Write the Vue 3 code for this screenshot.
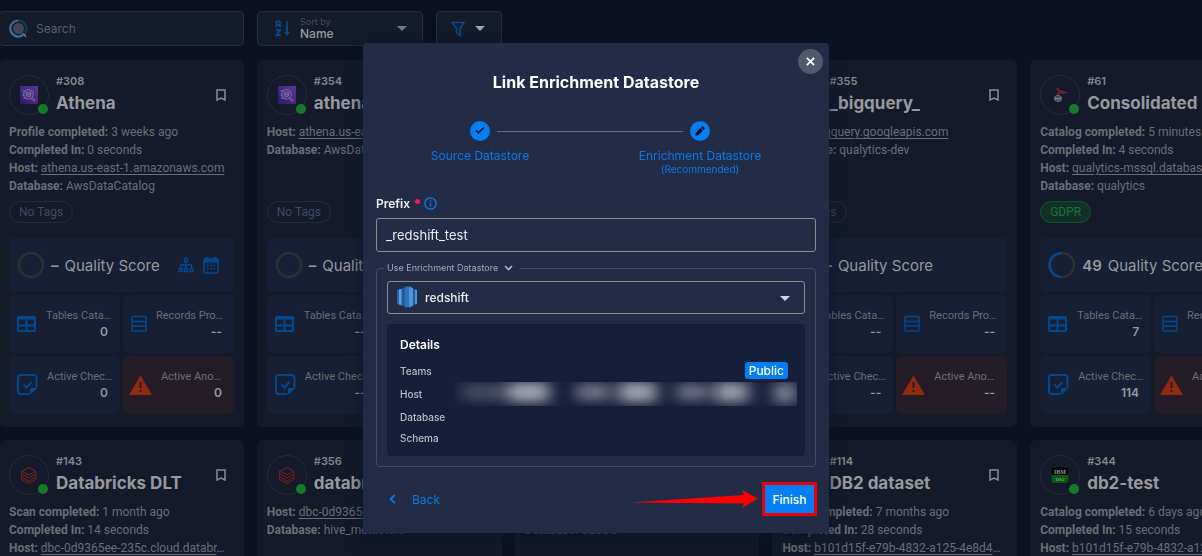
<script setup>
import { ref } from 'vue'

const prefix = ref('_redshift_test')
const datastore = ref('redshift')
const sort = ref('Name')
const query = ref('')

const cards = [
  { id: 308, name: 'Athena', logo: 'athena', score: '–', tools: true, tag: 'No Tags',
    info: [['Profile completed', '3 weeks ago'], ['Completed In', '0 seconds'], ['Host', 'athena.us-east-1.amazonaws.com', 'link'], ['Database', 'AwsDataCatalog']],
    stats: ['0', '--', '0', '0'] },
  { id: 354, name: 'athena_test', logo: 'athena', score: '–', tag: 'No Tags',
    info: [['Host', 'athena.us-east-1.amazonaws.com', 'link'], ['Database', 'AwsDataCatalog']],
    stats: ['--', '--', '--', '--'] },
  { id: 340, name: 'athena', logo: 'athena', score: '–', tag: 'No Tags',
    info: [['Database', 'AwsDataCatalog']],
    stats: ['--', '--', '--', '--'] },
  { id: 355, name: '_bigquery_', logo: 'athena', score: '–', tag: 'No Tags',
    info: [['Host', 'bigquery.googleapis.com', 'link'], ['Database', 'qualytics-dev']],
    stats: ['--', '--', '--', '--'] },
  { id: 61, name: 'Consolidated', logo: 'mssql', score: '49', tag: 'GDPR',
    info: [['Catalog completed', '5 minutes ago'], ['Completed In', '4 seconds'], ['Host', 'qualytics-mssql.database', 'link', '…'], ['Database', 'qualytics']],
    stats: ['7', '36', '114', '8'] },
  { id: 143, name: 'Databricks DLT', logo: 'databricks', score: '–', tag: 'No Tags',
    info: [['Scan completed', '1 month ago'], ['Completed In', '14 seconds'], ['Host', 'dbc-0d9365ee-235c.cloud.databr', 'link', '…']],
    stats: ['--', '--', '--', '--'] },
  { id: 356, name: 'databricks', logo: 'databricks', score: '–', tag: 'No Tags',
    info: [['Host', 'dbc-0d9365ee-235c.cloud.databr', 'link', '…'], ['Database', 'hive_metastore']],
    stats: ['--', '--', '--', '--'] },
  { id: 113, name: 'db2', logo: 'db2', score: '–', tag: 'No Tags',
    info: [['Host', 'b101d15f', 'link'], ['Database', 'BLUDB']],
    stats: ['--', '--', '--', '--'] },
  { id: 114, name: 'DB2 dataset', logo: 'db2', score: '–', tag: 'No Tags',
    info: [['Scan completed', '7 months ago'], ['Completed In', '28 seconds'], ['Host', 'b101d15f-e79b-4832-a125-4e8d4', 'link', '…']],
    stats: ['--', '--', '--', '--'] },
  { id: 344, name: 'db2-test', logo: 'db2', score: '–', tag: 'No Tags',
    info: [['Catalog completed', '6 days ago'], ['Completed In', '15 seconds'], ['Host', 'b101d15f-e79b-4832-a125-4e8d4', 'link', '…']],
    stats: ['--', '--', '--', '--'] },
]
const statLabels = ['Tables Cata…', 'Records Pro…', 'Active Chec…', 'Active Ano…']
</script>

<template>
  <div class="page">
    <header class="toolbar">
      <label class="box search">
        <svg width="20" height="20" viewBox="0 0 20 20" fill="none">
          <circle cx="9.500" cy="9.500" r="5.500" fill="#3d4755" />
          <path d="M9.500 1.500a8 8 0 1 0 4.500 14.500" stroke="#3c6d97" stroke-width="2.200" />
          <path d="M9.500 1.500a8 8 0 0 1 6.500 12.500" stroke="#123d58" stroke-width="2.200" />
          <path d="M12 13.500l4.500 1.500l1 4l-3-2.500" fill="#4a7ba6" />
        </svg>
        <input v-model="query" type="search" placeholder="Search" aria-label="Search" />
      </label>
      <div class="box sort">
        <svg width="16" height="17" viewBox="0 0 16 17" fill="none" stroke="#04498f" stroke-width="1.800">
          <path d="M1.500 7V2.500Q1.500 1.200 3.300 1.200T5 2.500V7M1.500 4.800H5M1 10.200H5L1.500 15H5.700M12 1v12" />
          <path d="M9 12h6l-3 4z" fill="#04498f" stroke="none" />
        </svg>
        <div class="sort-text">
          <label for="sort">Sort by</label>
          <select id="sort" v-model="sort"><option>Name</option></select>
        </div>
        <i class="caret"></i>
      </div>
      <button class="box filter" aria-label="Filter">
        <svg width="14" height="16" viewBox="0 0 14 16" fill="none" stroke="#04498f" stroke-width="1.600">
          <path d="M1 1.500h12L9 7.500v7l-3.500-3v-4z" />
        </svg>
        <i class="caret bright"></i>
      </button>
    </header>

    <main class="grid">
      <article v-for="c in cards" :key="c.id" class="card">
        <div class="head">
          <span class="avatar">
            <svg v-if="c.logo === 'athena'" width="18" height="18" viewBox="0 0 18 18" fill="none">
              <defs><linearGradient id="purple" x1="0" y1="1" x2="1" y2="0"><stop stop-color="#2e1a6c" /><stop offset="1" stop-color="#5a3793" /></linearGradient></defs>
              <path fill="url(#purple)" d="M0 0h18v18H0z" />
              <g stroke="#8f82ae" stroke-width=".8">
                <circle cx="8.500" cy="8.300" r="4.800" /><ellipse cx="8.500" cy="6.800" rx="2.500" ry="1" />
                <path d="M6 6.800l.5 3.500q2 1 4 0l.5-3.500M12 11.300l3.300 3-1.200 1.200-3-3.200M2.500 5h3M2.500 9h2M3 12h3M7 9h3" />
              </g>
            </svg>
            <svg v-else-if="c.logo === 'databricks'" width="18" height="18" viewBox="0 0 18 18" fill="none" stroke="#7d221f" stroke-width="1">
              <path d="M1.500 5.500L9 1.500l6.500 3.700L9 9 1.500 5.200v2.500L9 12l7-4V6M1.500 8.500v2.300L9 15l7-4V8.500M1.500 11.500v1.800L9 17.300l7-4v-2.500" />
            </svg>
            <svg v-else-if="c.logo === 'mssql'" width="18" height="18" viewBox="0 0 18 18" fill="none">
              <path d="M6 3l3 1 2 2 5 0-3 2-3 0-3 1-2 0 2-3z" fill="#6b1d27" />
              <path d="M5 3.500l3-1.500M8 4l4 3M11 5l5 2" stroke="#7c2a34" />
              <g stroke="#7c8289" stroke-width=".9"><ellipse cx="7" cy="12.500" rx="3.600" ry="3" /><path d="M4 11l6 3.500M4 14l6-3M7 9.500v6M3.500 12.500h7" /></g>
            </svg>
            <svg v-else width="18" height="18" viewBox="0 0 18 18">
              <rect width="17" height="16" x=".5" y="1" rx="2.500" fill="#04060a" />
              <path d="M.5 9h17v5.500a2.500 2.500 0 0 1-2.500 2.500H3A2.500 2.500 0 0 1 .5 14.500z" fill="#055a10" />
              <text x="9" y="7.500" text-anchor="middle" class="ibm">IBM</text>
              <text x="9" y="14.500" text-anchor="middle" class="ibm small">Db2</text>
            </svg>
            <i class="dot"></i>
          </span>
          <div class="names">
            <span class="num">#{{ c.id }}</span>
            <h2>{{ c.name }}</h2>
          </div>
          <button class="mark" aria-label="Bookmark">
            <svg width="10" height="12" viewBox="0 0 10 12" fill="none" stroke="#8b8d91" stroke-width="1.500"><path d="M1 1h8v10L5 9l-4 2z" /></svg>
          </button>
        </div>
        <div class="info">
          <p v-for="row in c.info" :key="row[0]">
            <b>{{ row[0] }}:</b>&nbsp;<a v-if="row[2]" href="#">{{ row[1] }}</a><span v-else>{{ row[1] }}</span>{{ row[3] }}
          </p>
        </div>
        <span class="tag" :class="{ green: c.tag === 'GDPR' }">{{ c.tag }}</span>
        <div class="stats">
          <div class="quality">
            <svg width="28" height="28" viewBox="0 0 28 28" fill="none" stroke-width="2.500">
              <circle cx="14" cy="14" r="12" stroke="#2f3031" />
              <path v-if="c.score === '49'" d="M14 2a12 12 0 0 0-1 24" stroke="#04498f" />
            </svg>
            <strong>{{ c.score }}</strong><span>Quality Score</span>
            <template v-if="c.tools">
              <svg class="tree" width="16" height="16" viewBox="0 0 16 16" fill="none" stroke="#04498f" stroke-width="1.300">
                <path d="M6.500 1.500h3v3h-3zM1 11.500h3v3H1zM6.500 11.500h3v3h-3zM12 11.500h3v3h-3zM8 4.500v7M2.500 11.500V8h11v3.500" />
              </svg>
              <svg width="16" height="18" viewBox="0 0 16 18" fill="none" stroke="#04498f">
                <rect x="1" y="3" width="14" height="14" rx="1.500" stroke-width="1.600" />
                <path d="M1 4.500h14" stroke-width="4" /><path d="M4 1v3M12 1v3" stroke-width="2" />
                <path d="M4 9.500h8M4 12.500h8" stroke-width="1.700" stroke-dasharray="1.800 1.300" />
              </svg>
            </template>
          </div>
          <div v-for="(label, i) in statLabels" :key="label" class="stat" :class="'s' + i">
            <svg v-if="i === 0" width="20" height="18" viewBox="0 0 20 18" fill="none" stroke="#04498f" stroke-width="2">
              <rect x="1" y="2" width="17" height="14" rx="1" /><path d="M1 3h17" stroke-width="3" /><path d="M1 10.500h17M9.500 4v12" />
            </svg>
            <svg v-else-if="i === 1" width="16" height="18" viewBox="0 0 16 18" fill="none" stroke="#04498f" stroke-width="1.500">
              <rect x="1" y="1.500" width="14" height="14.500" rx="1" /><path d="M1 6.500h14M1 11h14" />
            </svg>
            <svg v-else-if="i === 2" width="21" height="22" viewBox="0 0 21 22" fill="none" stroke="#04498f" stroke-width="2">
              <path d="M12.500 20H4a3 3 0 0 1-3-3V4a3 3 0 0 1 3-3h12.500a3 3 0 0 1 3 3v9.500M6.500 10.500l3 3 5-5.500" /><path d="M13.500 20v-5.500h6z" fill="#04498f" stroke-width="1" />
            </svg>
            <svg v-else width="23" height="20" viewBox="0 0 23 20">
              <path d="M11.500.5L23 20H0z" fill="#93290f" /><path d="M11.500 7v6M11.500 15v2" stroke="#241d27" stroke-width="2" />
            </svg>
            <div class="stat-text"><span>{{ label }}</span><strong>{{ c.stats[i] }}</strong></div>
          </div>
        </div>
      </article>
    </main>

    <div class="overlay">
      <section class="modal" role="dialog" aria-labelledby="title">
        <button class="close" aria-label="Close">
          <svg width="9" height="9" viewBox="0 0 10 10" stroke="#fff" stroke-width="2"><path d="M1 1l8 8M9 1L1 9" /></svg>
        </button>
        <h1 id="title">Link Enrichment Datastore</h1>
        <div class="track">
          <span class="step"><svg width="20" height="20" viewBox="0 0 20 20" fill="none" stroke="#0a1020" stroke-width="1.500"><path d="M6 9.500l2.500 2.300L14 6.500" /></svg></span>
          <i></i>
          <span class="step"><svg width="20" height="20" viewBox="0 0 20 20" fill="#0a1020"><path d="M5.500 12.200v2.300h2.300l5.100-5.100-2.300-2.300zM11.200 6.500l2.300 2.300 1.100-1.100q.4-.4 0-.8l-1.500-1.500q-.4-.4-.8 0z" /></svg></span>
        </div>
        <div class="labels">
          <span>Source Datastore</span>
          <span>Enrichment Datastore<small>(Recommended)</small></span>
        </div>

        <div class="field-label">
          <label for="prefix">Prefix</label><i></i>
          <svg width="13" height="13" viewBox="0 0 13 13" fill="none" stroke="#0a78e6" stroke-width="1.300"><circle cx="6.500" cy="6.500" r="5.700" /><path d="M6.500 5.700v4M6.500 3.300v1.300" /></svg>
        </div>
        <input id="prefix" v-model="prefix" class="prefix" type="text" />

        <fieldset>
          <legend>Use Enrichment Datastore
            <svg width="9" height="6" viewBox="0 0 9 6" fill="none" stroke="#b4b8c3" stroke-width="1.600"><path d="M1 1l3.500 3.500L8 1" /></svg>
          </legend>
          <div class="picker">
            <svg width="20" height="22" viewBox="0 0 20 22">
              <path d="M0 4l3-1v16l-3-1z" fill="#2367ad" /><path d="M2 3.500l4-1v17l-4-1z" fill="#5aa0dc" /><path d="M4.500 3L9 1v20l-4.500-2z" fill="#1f5c9d" />
              <path d="M8 .7h6v20.600H8z" fill="#2e73b7" /><path d="M12 .7l4 1.300v18l-4 1.300z" fill="#5294cf" /><path d="M16 3l2 .5v15l-2 .5z" fill="#1f5c9d" /><path d="M18 3.500l2 .5v14l-2 .5z" fill="#5294cf" />
            </svg>
            <select v-model="datastore" aria-label="Enrichment datastore"><option>redshift</option></select>
            <i class="caret light"></i>
          </div>
          <div class="details">
            <h3>Details</h3>
            <dl>
              <div class="teams"><dt>Teams</dt><dd><span class="badge">Public</span></dd></div>
              <div class="host"><dt>Host</dt><dd>
                <svg width="342" height="24" viewBox="0 0 342 24">
                  <defs><filter id="soft" x="-20%" y="-100%" width="140%" height="300%"><feGaussianBlur stdDeviation="8 6" /></filter></defs>
                  <g filter="url(#soft)" fill="#a3a4b3">
                    <rect x="8" y="2" width="50" height="16" opacity=".35" /><rect x="54" y="0" width="40" height="20" />
                    <rect x="122" y="2" width="32" height="16" opacity=".7" /><rect x="164" y="0" width="37" height="20" />
                    <rect x="222" y="2" width="30" height="16" opacity=".65" /><rect x="260" y="0" width="33" height="20" opacity=".95" />
                    <rect x="320" y="1" width="20" height="20" opacity=".8" />
                  </g>
                </svg>
              </dd></div>
              <div><dt>Database</dt><dd></dd></div>
              <div><dt>Schema</dt><dd></dd></div>
            </dl>
          </div>
        </fieldset>

        <footer>
          <button class="back">
            <svg width="7" height="10" viewBox="0 0 7 10" fill="none" stroke="#0a78e6" stroke-width="1.800"><path d="M6 .8L1.500 5 6 9.200" /></svg>Back
          </button>
          <svg class="arrow" width="128" height="20" viewBox="0 0 128 20"><path d="M0 13.500L114 6l-2-5 16 8.500L112 19l2-4.500z" fill="#fe0000" /></svg>
          <button class="finish">Finish</button>
        </footer>
      </section>
    </div>
  </div>
</template>

<style>
html, body { margin: 0; background: #0b1120; overflow: hidden; }
</style>

<style scoped>
* { box-sizing: border-box; }
.page { font-family: Inter, "Liberation Sans", sans-serif; height: 100vh; overflow: hidden; background: #0b1120; color: #98999c; font-size: 12px; }
button, input, select { font: inherit; color: inherit; background: none; border: 0; padding: 0; margin: 0; outline: 0; appearance: none; }
h1, h2, h3, p, dl, dd { margin: 0; }
svg { display: block; flex: none; }
.toolbar { display: flex; gap: 13px; padding-top: 11px; margin-left: -1px; }
.box { height: 35px; display: flex; align-items: center; border: 1px solid #272d3a; border-radius: 4px; background: #141b29; }
.search { width: 245px; padding: 0 9px; gap: 7px; }
.search input { flex: 1; min-width: 0; }
.search input::placeholder { color: #5d6065; opacity: 1; }
.sort { width: 166px; padding: 0 15px 0 17px; gap: 9px; }
.sort-text { flex: 1; display: flex; flex-direction: column; }
.sort-text label { font-size: 9px; line-height: 11px; color: #4b4e54; }
.sort-text select { line-height: 14px; font-weight: 500; color: #9a9b9d; }
.caret { border: 5px solid transparent; border-top-color: #77797e; border-bottom: 0; }
.caret.bright { border-top-color: #a3a4a6; }
.filter { width: 66px; padding: 0 16px 0 14px; justify-content: space-between; }

.grid { display: grid; grid-template-columns: repeat(5, minmax(0, 1fr)); gap: 13px; margin: 14px -73px 0 -1px; }
.card { height: 367px; padding: 15px 10px 14px; border-radius: 6px; background: #141a29; }
.head { display: flex; height: 40px; }
.avatar { width: 40px; height: 40px; border: 1px solid #252a37; border-radius: 50%; display: flex; align-items: center; justify-content: center; position: relative; }
.dot { position: absolute; right: 0; bottom: 0; width: 10px; height: 10px; border-radius: 50%; background: #167a2a; }
.ibm { font: bold 6px "Liberation Serif", serif; fill: #8d8f90; }
.ibm.small { font-size: 5px; }
.names { flex: 1; padding-left: 7px; min-width: 0; }
.num { display: block; font-size: 11px; line-height: 13px; font-weight: 600; color: #85878b; }
h2 { font-size: 17px; line-height: 24px; margin-top: 3px; font-weight: 700; white-space: nowrap; }
.mark { width: 24px; padding-left: 6px; }
.info { height: 71px; margin-top: 8px; color: #6b6e74; white-space: nowrap; font-family: Roboto, "Liberation Sans", sans-serif; }
.info p { line-height: 18px; height: 18px; }
.info b { font-weight: 700; }
.info a { color: inherit; text-underline-offset: 2px; }
.tag { display: inline-block; height: 22px; line-height: 20px; margin-top: 7px; padding: 0 9px; border: 1px solid #252b39; border-radius: 11px; color: #404a68; font-family: Roboto, "Liberation Sans", sans-serif; }
.tag.green { color: #127a33; border-color: #155033; background: #123028; }
.stats { display: grid; grid-template-columns: repeat(2, minmax(0, 1fr)); gap: 3px; margin-top: 15px; }
.quality { grid-column: 1 / 3; height: 54px; display: flex; align-items: center; padding: 0 15px 0 8px; border-radius: 6px; background: #161f33; font-size: 15px; white-space: nowrap; }
.quality strong { margin: 0 6px; font-weight: 600; }
.quality .tree { margin: 0 9px 0 auto; }
.stat { height: 58px; display: flex; align-items: center; gap: 9px; padding: 0 12px 0 8px; border-radius: 6px; background: #161f33; }
.s3 { background: #241d27; padding-left: 6px; }
.stat-text { flex: 1; min-width: 0; display: flex; flex-direction: column; }
.stat-text span { font-family: Roboto, "Liberation Sans", sans-serif; font-size: 11px; line-height: 16px; color: #6b6e76; white-space: nowrap; }
.stat-text strong { text-align: right; line-height: 16px; font-weight: 600; }

.overlay { position: fixed; inset: 0; display: flex; align-items: center; justify-content: center; padding: 20px 10px 0 0; }
.modal { position: relative; width: 466px; padding: 28px 13px 17px; border-radius: 4px; background: #232c47; color: #eceef2; box-shadow: 0 6px 16px rgba(10, 20, 42, .8); }
.close { position: absolute; top: 6px; right: 6px; width: 25px; height: 25px; border-radius: 50%; background: #515a6b; display: flex; align-items: center; justify-content: center; }
h1 { font-size: 16px; line-height: 22px; font-weight: 700; text-align: center; color: #fff; }
.track { display: flex; align-items: center; margin-top: 28px; padding: 0 106px 0 94px; }
.track i { flex: 1; height: 1px; margin: 0 7px; background: #656d82; }
.step { width: 20px; height: 20px; border-radius: 50%; background: #037ef3; }
.labels { display: grid; grid-template-columns: 1fr 1fr; margin: 7px 6px 0 -6px; text-align: center; color: #0a78e6; line-height: 16px; }
.labels small { display: block; font-size: 10px; line-height: 10px; }
.field-label { display: flex; align-items: center; height: 16px; margin-top: 21px; font-weight: 600; }
.field-label i { width: 5px; height: 5px; border-radius: 50%; background: #ee1c5c; margin: 0 4px 4px 5px; }
.prefix { display: block; width: 100%; height: 34px; margin-top: 7px; padding: 0 9px; border: 1px solid #8b8b88; border-radius: 3px; font-size: 13px; }
fieldset { margin: 9px 0 0; padding: 6px 10px 10px; border: 1px solid #434b63; border-radius: 4px; min-width: 0; }
legend { display: flex; align-items: center; gap: 6px; padding: 0 7px 0 3px; margin-left: -3px; font-size: 9px; line-height: 14px; color: #a5a9b5; }
.picker { position: relative; }
.picker select { width: 100%; height: 33px; padding-left: 37px; border: 1px solid #8b8b88; border-radius: 3px; font-weight: 500; }
.picker svg { position: absolute; left: 10px; top: 5px; }
.picker .caret { position: absolute; right: 15px; top: 15px; }
.caret.light { border-top-color: #d5d8df; }
.details { margin-top: 10px; padding: 13px 13px 8px; border-radius: 4px; background: #161f3a; }
h3 { font-size: 12px; line-height: 16px; font-weight: 600; color: #fff; }
dl { margin-top: 9px; font-size: 10px; font-weight: 500; color: #b9bcc6; }
dl div { display: flex; justify-content: space-between; align-items: center; height: 21px; }
dl .teams { height: 17px; margin-bottom: 3px; }
dl .host { height: 24px; margin-right: -5px; }
.teams dd { padding-right: 4px; }
.badge { display: block; height: 17px; line-height: 17px; padding: 0 4px; border-radius: 3px; background: #037ef3; color: #fff; font-size: 12px; }
footer { display: flex; align-items: center; margin-top: 15px; height: 34px; }
.back { display: flex; align-items: center; gap: 16px; padding-left: 13px; color: #0a78e6; }
.arrow { margin: 0 4px 0 auto; }
.finish { height: 34px; min-width: 55px; margin-right: -1px; border: 3px solid #e8000d; background: #037ef3; color: #fff; font-weight: 500; }
</style>
